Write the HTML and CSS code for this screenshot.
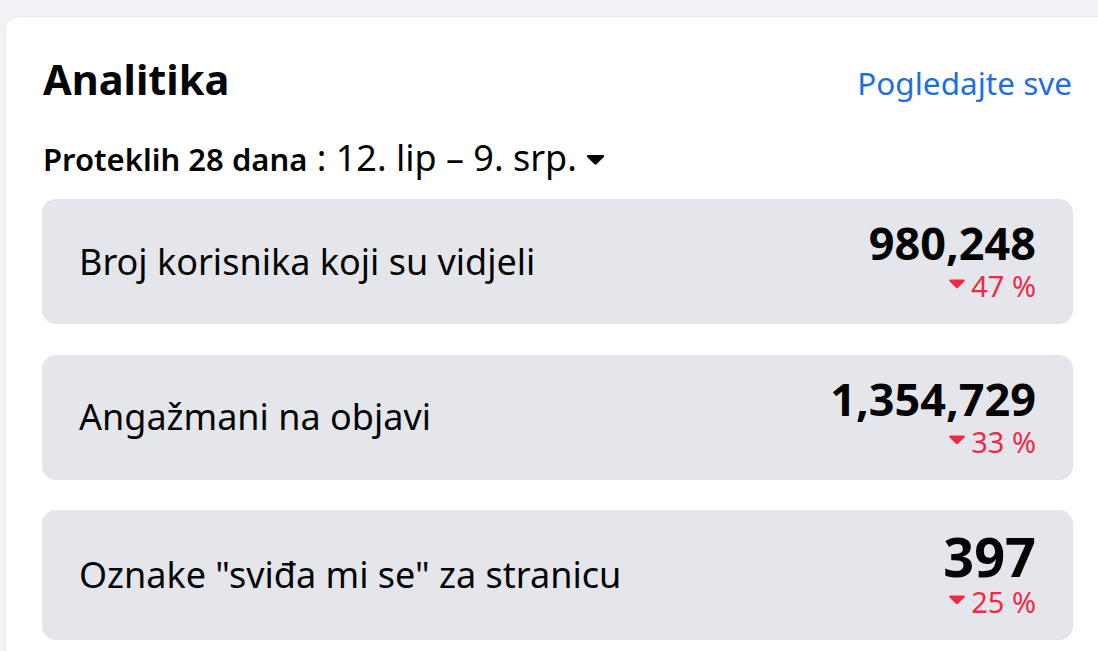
FILE: index.html
```html
<!DOCTYPE html>
<html lang="hr">
<head>
<meta charset="utf-8">
<title>Analitika</title>
<link rel="stylesheet" href="styles.css">
</head>
<body>
<main class="page">
  <section class="card">
    <header class="card-head">
      <h1 class="title">Analitika</h1>
      <a class="see-all" href="#">Pogledajte sve</a>
    </header>
    <div class="range">
      <span class="range-label">Proteklih 28 dana</span><span class="range-dates"> : 12. lip – 9. srp.</span>
      <svg class="range-caret" viewBox="0 0 18 11" aria-hidden="true"><path d="M1.6 1h14.8c1.1 0 1.7 1.3 1 2.1l-7.4 7.1c-.5.5-1.5.5-2 0L.6 3.1C-.1 2.3.5 1 1.6 1z" fill="#050505"/></svg>
    </div>
    <div class="stats">
      <div class="stat">
        <span class="stat-label">Broj korisnika koji su vidjeli</span>
        <div class="stat-figures">
          <span class="stat-value">980,248</span>
          <span class="stat-change"><svg class="down" viewBox="0 0 16 10" aria-hidden="true"><path d="M1.4 0.5h13.2c1 0 1.5 1.2.8 1.9L8.8 9c-.5.5-1.2.5-1.6 0L.6 2.4C-.1 1.7.4.5 1.4.5z" fill="#f02849"/></svg><span>47 %</span></span>
        </div>
      </div>
      <div class="stat">
        <span class="stat-label">Angažmani na objavi</span>
        <div class="stat-figures">
          <span class="stat-value">1,354,729</span>
          <span class="stat-change"><svg class="down" viewBox="0 0 16 10" aria-hidden="true"><path d="M1.4 0.5h13.2c1 0 1.5 1.2.8 1.9L8.8 9c-.5.5-1.2.5-1.6 0L.6 2.4C-.1 1.7.4.5 1.4.5z" fill="#f02849"/></svg><span>33 %</span></span>
        </div>
      </div>
      <div class="stat">
        <span class="stat-label">Oznake "sviđa mi se" za stranicu</span>
        <div class="stat-figures">
          <span class="stat-value stat-value-lg">397</span>
          <span class="stat-change"><svg class="down" viewBox="0 0 16 10" aria-hidden="true"><path d="M1.4 0.5h13.2c1 0 1.5 1.2.8 1.9L8.8 9c-.5.5-1.2.5-1.6 0L.6 2.4C-.1 1.7.4.5 1.4.5z" fill="#f02849"/></svg><span>25 %</span></span>
        </div>
      </div>
    </div>
  </section>
</main>
</body>
</html>
```

FILE: styles.css
```css
html, body {
  margin: 0;
  padding: 0;
  overflow: hidden;
  height: 100%;
}

body {
  background: #f0f2f5;
  font-family: "Segoe UI", "Noto Sans", "Open Sans", sans-serif;
  color: #050505;
}

.page {
  padding: 17px 0 0 6px;
  height: 100%;
  box-sizing: border-box;
}

.card {
  background: #ffffff;
  border-radius: 12px 0 0 0;
  box-shadow: 0 0 2px rgba(0, 0, 0, 0.12);
  margin-right: -12px;
  padding: 36px 37px 40px 36px;
  min-height: 100%;
  box-sizing: border-box;
}

.card-head {
  display: flex;
  justify-content: space-between;
  align-items: baseline;
}

.title {
  margin: 0;
  font-size: 41.5px;
  line-height: 53px;
  font-weight: 700;
  padding-left: 1px;
}

.see-all {
  font-size: 31.5px;
  color: #216fdb;
  text-decoration: none;
  margin-right: 1px;
}

.range {
  margin-top: 32px;
  font-size: 36px;
  line-height: 40px;
  display: flex;
  align-items: baseline;
}

.range-label {
  font-size: 31px;
  font-weight: 600;
  padding-left: 1px;
}

.range-dates {
  white-space: pre;
}

.range-caret {
  width: 19px;
  height: 11px;
  margin-left: 9px;
  align-self: center;
  margin-top: 2px;
}

.stats {
  margin-top: 20px;
  display: flex;
  flex-direction: column;
  gap: 30.5px;
}

.stat {
  background: #e4e6eb;
  border-radius: 14px;
  padding: 21px 37px 22px 37px;
  display: flex;
  justify-content: space-between;
  align-items: center;
}

.stat-label {
  font-size: 36px;
}

.stat-figures {
  display: flex;
  flex-direction: column;
  align-items: flex-end;
  gap: 4px;
}

.stat-value {
  font-size: 45px;
  line-height: 46px;
  font-weight: 700;
}

.stat-value-lg {
  font-size: 54px;
  line-height: 51px;
}

.stat-change {
  font-size: 29px;
  line-height: 32px;
  color: #f02849;
  display: flex;
  align-items: center;
}

.down {
  width: 16px;
  height: 10px;
  margin-right: 6px;
  margin-top: -4px;
}
```
